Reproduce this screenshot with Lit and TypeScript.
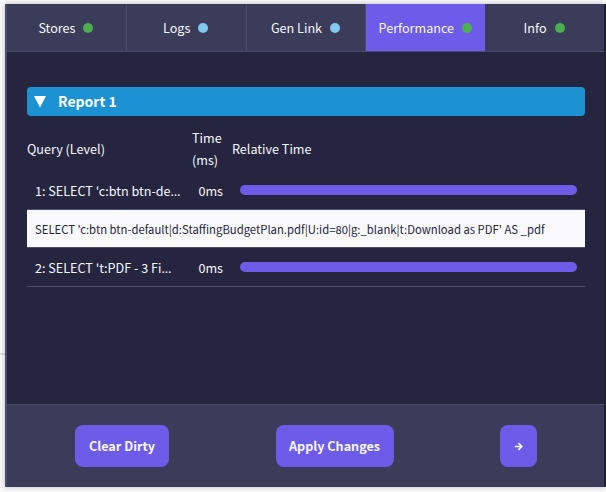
import { LitElement, html, css } from 'lit';
import { customElement } from 'lit/decorators.js';

const FULL_QUERY = "SELECT 'c:btn btn-default|d:StaffingBudgetPlan.pdf|U:id=80|g:_blank|t:Download as PDF' AS _pdf";

@customElement('app-root')
export class AppRoot extends LitElement {
  static styles = css`
    :host {
      display: block;
      height: 492px;
      overflow: hidden;
      background: #f8f8f8;
      font-family: 'Noto Sans CJK KR', 'Noto Sans', sans-serif;
      font-size: 12.6px;
      color: #f8f8fc;
    }
    .page {
      height: 492px;
      box-sizing: border-box;
      padding: 4px 2px 5px 5px;
      background: linear-gradient(#dcdcdc, #dcdcdc) no-repeat 0 353px / 5px 2px;
    }
    .panel {
      height: 100%;
      display: flex;
      flex-direction: column;
      box-sizing: border-box;
      border-left: 2px solid #4a4d6b;
      background: #25253f;
      box-shadow: 0 0 5px rgba(0, 0, 0, 0.25), 2px 0 0 #24242c;
    }
    .tabs {
      display: flex;
      box-sizing: border-box;
      height: 48px;
      background: #3a3c5a;
      border-bottom: 1px solid #4b4d6b;
    }
    .tab {
      flex: 1;
      display: flex;
      align-items: center;
      justify-content: center;
      gap: 8px;
      padding-right: 1px;
      border-right: 1px solid #4b4d6b;
    }
    .tab:last-child { border-right: 0; }
    .tab.active { background: #6c5ce7; border-right: 0; }
    .dot { width: 10px; height: 10px; border-radius: 50%; }
    .green { background: #4caf50; }
    .blue { background: #81c9ef; }
    .body { flex: 1; padding: 35px 19px 0 20px; }
    .report {
      display: flex;
      align-items: center;
      gap: 12px;
      height: 29px;
      padding-left: 7px;
      border-radius: 4px;
      background: #1c92d2;
      color: #fff;
      font-size: 14px;
      font-weight: 700;
    }
    .report span { padding-bottom: 2px; }
    table {
      width: 100%;
      table-layout: fixed;
      border-collapse: collapse;
      margin-top: 11px;
    }
    th { font-weight: 400; text-align: left; padding: 0; line-height: 22px; }
    .col-query { width: 165px; }
    .col-time { width: 40px; }
    .row td { height: 38px; padding: 0; }
    .name {
      padding-left: 8px !important;
      white-space: nowrap;
    }
    .dots { font-family: 'Noto Sans', sans-serif; }
    .ms { text-align: right; padding-right: 9px !important; }
    .bar { height: 10px; margin: 0 8px; border-radius: 5px; background: #6c5ce7; }
    .detail td {
      height: 37px;
      padding: 0 8px;
      background: #f9f9fb;
      color: #25253f;
      font-size: 11.3px;
      white-space: nowrap;
      border-top: 1px solid #4b4d6b;
      border-bottom: 1px solid #4b4d6b;
    }
    .last td { border-bottom: 1px solid #4b4d6b; }
    .footer {
      display: flex;
      align-items: center;
      justify-content: space-between;
      box-sizing: border-box;
      height: 83px;
      padding: 0 67px 0 68px;
      background: #3a3c5a;
      border-top: 1px solid #4b4d6b;
    }
    button {
      display: flex;
      align-items: center;
      justify-content: center;
      box-sizing: border-box;
      height: 42px;
      padding: 0 14px 2px;
      border: 0;
      border-radius: 8px;
      background: #6c5ce7;
      color: #f8f8fc;
      font: 700 12.6px 'Noto Sans CJK KR', 'Noto Sans', sans-serif;
    }
    button.apply { padding: 0 13.5px 2px; }
    button.icon { width: 37px; padding: 0; }
  `;

  render() {
    const tabs: [string, string, boolean][] = [
      ['Stores', 'green', false],
      ['Logs', 'blue', false],
      ['Gen Link', 'blue', false],
      ['Performance', 'green', true],
      ['Info', 'green', false],
    ];
    return html`
      <div class="page">
        <div class="panel">
          <div class="tabs">
            ${tabs.map(([label, color, active]) => html`
              <div class="tab ${active ? 'active' : ''}">
                <span>${label}</span><span class="dot ${color}"></span>
              </div>
            `)}
          </div>
          <div class="body">
            <div class="report">
              <svg width="12" height="12" viewBox="0 0 12 12"><path d="M0 0h12L6 11.5z" fill="#fff"/></svg>
              <span>Report 1</span>
            </div>
            <table>
              <tr>
                <th class="col-query">Query (Level)</th>
                <th class="col-time">Time (ms)</th>
                <th>Relative Time</th>
              </tr>
              <tr class="row">
                <td class="name">1: SELECT 'c:btn btn-de<span class="dots">…</span></td>
                <td class="ms">0ms</td>
                <td><div class="bar"></div></td>
              </tr>
              <tr class="detail"><td colspan="3">${FULL_QUERY}</td></tr>
              <tr class="row last">
                <td class="name">2: SELECT 't:PDF - 3 Fi<span class="dots">…</span></td>
                <td class="ms">0ms</td>
                <td><div class="bar"></div></td>
              </tr>
            </table>
          </div>
          <div class="footer">
            <button>Clear Dirty</button>
            <button class="apply">Apply Changes</button>
            <button class="icon">
              <svg width="9" height="9" viewBox="0 0 9 9"><path d="M.8 4.5h6.4M4.4 1.2l3.3 3.3-3.3 3.3" fill="none" stroke="#f8f8fc" stroke-width="1.7"/></svg>
            </button>
          </div>
        </div>
      </div>
    `;
  }
}
